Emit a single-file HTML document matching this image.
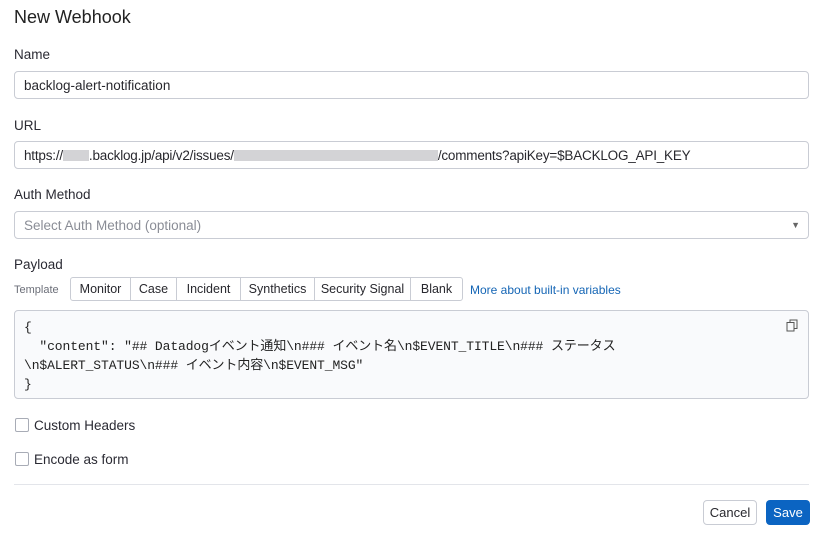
<!DOCTYPE html>
<html><head><meta charset="utf-8"><style>
*{box-sizing:border-box;margin:0;padding:0}
body{width:822px;height:541px;background:#fff;font-family:"Liberation Sans","Noto Sans CJK JP",sans-serif;color:#28282e;position:relative;overflow:hidden;font-size:13px}
.a{position:absolute}
.lbl{font-size:13.5px;color:#2a2a33}
.inp{position:absolute;left:14px;width:795px;height:28px;border:1px solid #c9ccd4;border-radius:4px;padding:0 9px;line-height:27px;font-size:13.5px;background:#fff}
.grp{position:absolute;left:70px;top:277px;height:24px;display:flex;border:1px solid #c9ccd4;border-radius:3px;overflow:hidden}
.grp div{border-right:1px solid #c9ccd4;line-height:23px;font-size:12.5px;text-align:center}
.grp div:last-child{border-right:none}
.code{position:absolute;left:14px;top:310px;width:795px;height:89px;border:1px solid #c9ccd4;border-radius:4px;background:#f9fafc;padding:7px 9px;font-family:"Liberation Mono","Noto Sans CJK JP",monospace;font-size:13px;line-height:19px;white-space:pre;color:#222;letter-spacing:-0.1px}
.cb{position:absolute;left:15px;width:14px;height:14px;border:1px solid #a8acb6;border-radius:2px;background:#fff}
.blur{display:inline-block;height:11px;background:#c8c8cc;vertical-align:-1px;opacity:.8}
</style></head><body>
<div class="a" style="left:14px;top:7px;font-size:18px;color:#222">New Webhook</div>
<div class="a lbl" style="left:14px;top:47px">Name</div>
<div class="inp" style="top:71px">backlog-alert-notification</div>
<div class="a lbl" style="left:14px;top:118px">URL</div>
<div class="inp" style="top:141px;letter-spacing:-0.2px">https://<span class="blur" style="width:26px"></span>.backlog.jp/api/v2/issues/<span class="blur" style="width:204px"></span>/comments?apiKey=$BACKLOG_API_KEY</div>
<div class="a lbl" style="left:14px;top:187px">Auth Method</div>
<div class="inp" style="top:211px;color:#8a8d96">Select Auth Method (optional)<span style="position:absolute;right:8px;top:0;font-size:9px;color:#666">▼</span></div>
<div class="a lbl" style="left:14px;top:257px">Payload</div>
<div class="a" style="left:14px;top:284px;font-size:11px;color:#6b6e78">Template</div>
<div class="grp">
<div style="width:60px">Monitor</div><div style="width:46px">Case</div><div style="width:64px">Incident</div><div style="width:74px">Synthetics</div><div style="width:96px">Security Signal</div><div style="width:51px">Blank</div></div>
<div class="a" style="left:470px;top:283px;font-size:12px;color:#1465b5">More about built-in variables</div>
<div class="code">{
  "content": "## Datadogイベント通知\n### イベント名\n$EVENT_TITLE\n### ステータス
\n$ALERT_STATUS\n### イベント内容\n$EVENT_MSG"
}</div>
<svg class="a" style="left:786px;top:319px" width="12" height="13" viewBox="0 0 12 13"><rect x="1" y="3.5" width="7" height="8.5" fill="none" stroke="#555" stroke-width="1"/><path d="M4 3.5V1h7v8.5H8" fill="none" stroke="#555" stroke-width="1"/></svg>
<div class="cb" style="top:418px"></div>
<div class="a lbl" style="left:34px;top:418px">Custom Headers</div>
<div class="cb" style="top:452px"></div>
<div class="a lbl" style="left:34px;top:452px">Encode as form</div>
<div class="a" style="left:14px;top:484px;width:795px;height:1px;background:#e3e5ea"></div>
<div class="a" style="left:703px;top:500px;width:54px;height:25px;border:1px solid #c9ccd4;border-radius:4px;text-align:center;line-height:23px;font-size:13px">Cancel</div>
<div class="a" style="left:766px;top:500px;width:44px;height:25px;background:#0b64c2;border-radius:4px;text-align:center;line-height:25px;font-size:13px;color:#fff">Save</div>
</body></html>
